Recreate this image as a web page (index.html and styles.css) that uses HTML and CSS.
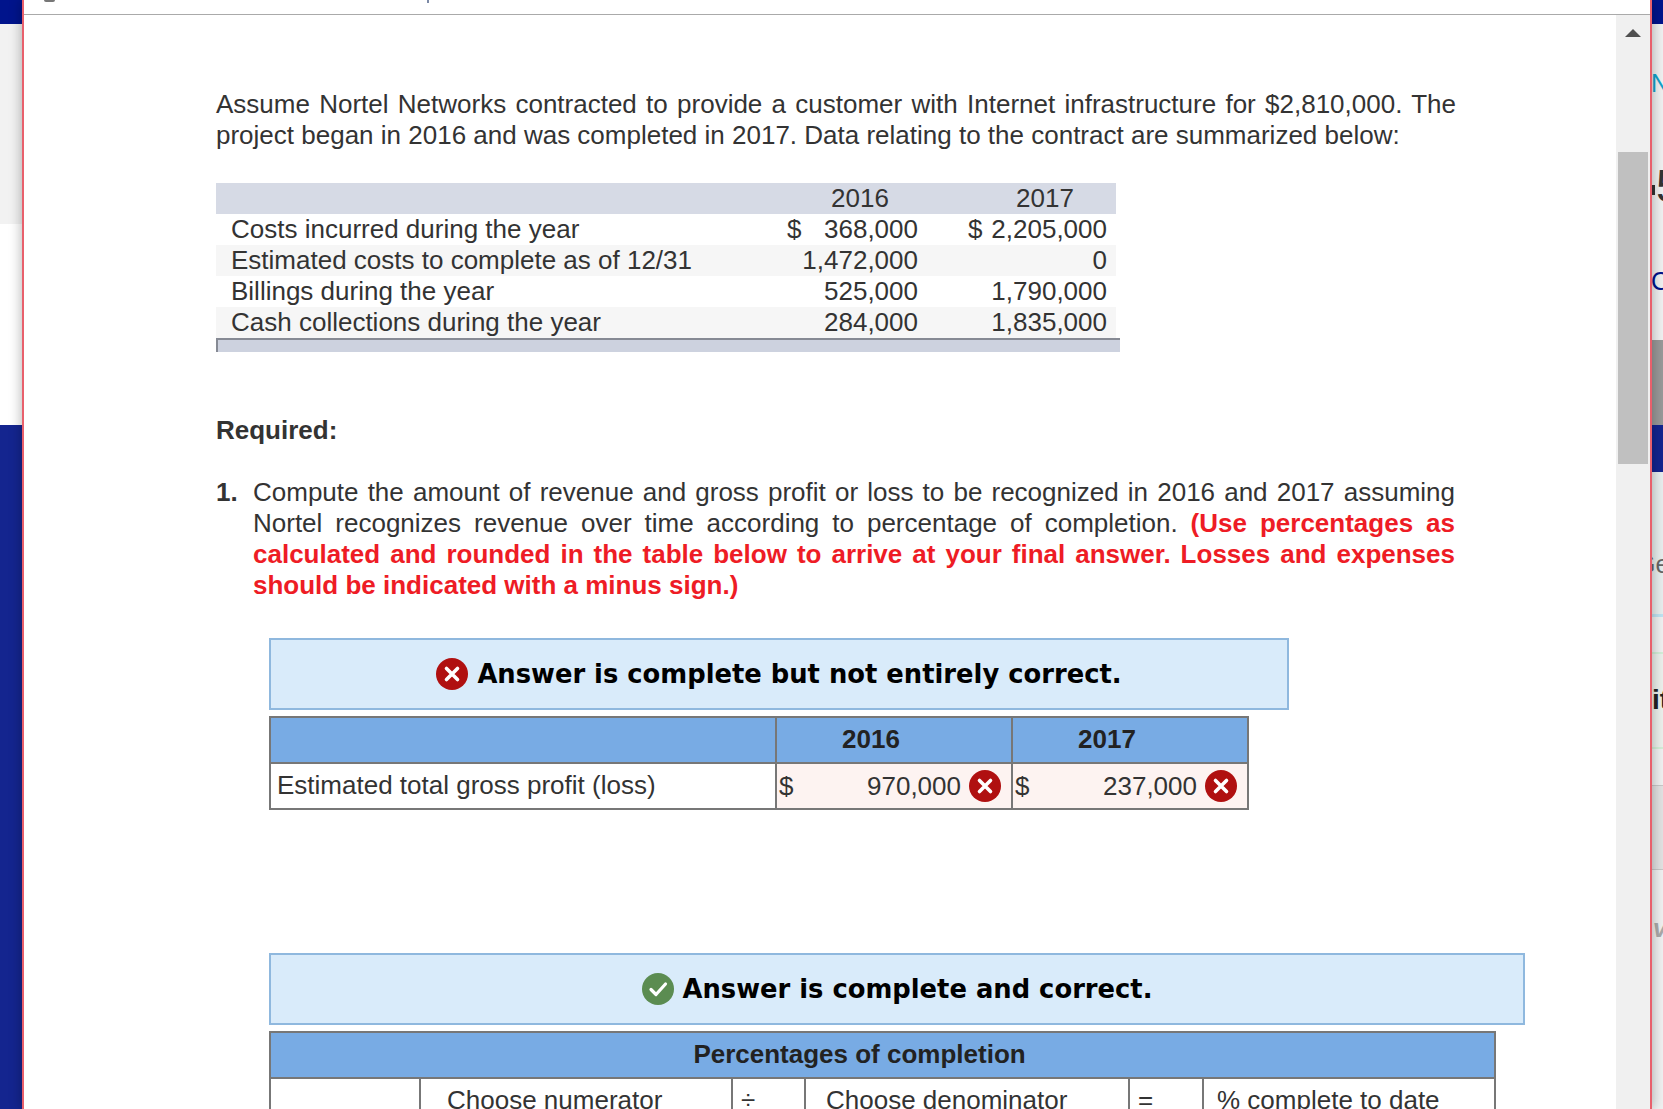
FILE: index.html
```html
<!DOCTYPE html>
<html lang="en">
<head>
<meta charset="utf-8">
<title>Nortel Networks percentage of completion</title>
<link rel="stylesheet" href="styles.css">
</head>
<body>
<svg class="defs" width="0" height="0" aria-hidden="true">
  <symbol id="icon-x" viewBox="0 0 32 32">
    <circle cx="16" cy="16" r="16" fill="#b01010"/>
    <path d="M10.5 10.5 21.5 21.5M21.5 10.5 10.5 21.5" stroke="#fff" stroke-width="3.6" stroke-linecap="round" fill="none"/>
  </symbol>
  <symbol id="icon-check" viewBox="0 0 32 32">
    <circle cx="16" cy="16" r="16" fill="#5b8c51"/>
    <path d="M9 16.5 14 21.5 23.5 11" stroke="#fff" stroke-width="3.2" stroke-linecap="round" stroke-linejoin="round" fill="none"/>
  </symbol>
</svg>
<div class="desktop">
  <aside class="strip-left">
    <div class="sl-blue"></div>
    <div class="sl-grey"></div>
    <div class="sl-white"></div>
    <div class="sl-navy"></div>
  </aside>

  <main class="modal">
    <div class="topbar">
      <span class="top-dot"></span>
      <span class="top-tick"></span>
    </div>
    <div class="modal-body">
      <div class="content">
        <p class="intro">Assume Nortel Networks contracted to provide a customer with Internet infrastructure for $2,810,000. The project began in 2016 and was completed in 2017. Data relating to the contract are summarized below:</p>

        <table class="data">
          <colgroup><col class="d-label"><col class="d-a"><col class="d-b"></colgroup>
          <thead>
            <tr><th></th><th class="h16">2016</th><th class="h17">2017</th></tr>
          </thead>
          <tbody>
            <tr><td class="lbl">Costs incurred during the year</td><td class="n16"><span class="cur">$</span>368,000</td><td class="n17"><span class="cur">$</span>2,205,000</td></tr>
            <tr class="alt"><td class="lbl">Estimated costs to complete as of 12/31</td><td class="n16">1,472,000</td><td class="n17">0</td></tr>
            <tr><td class="lbl">Billings during the year</td><td class="n16">525,000</td><td class="n17">1,790,000</td></tr>
            <tr class="alt"><td class="lbl">Cash collections during the year</td><td class="n16">284,000</td><td class="n17">1,835,000</td></tr>
          </tbody>
        </table>
        <div class="data-foot"></div>

        <p class="required">Required:</p>

        <div class="question">
          <b class="q-num">1.</b>
          <p class="q-text">Compute the amount of revenue and gross profit or loss to be recognized in 2016 and 2017 assuming Nortel recognizes revenue over time according to percentage of completion. <b class="warn">(Use percentages as calculated and rounded in the table below to arrive at your final answer. Losses and expenses should be indicated with a minus sign.)</b></p>
        </div>

        <div class="alert alert-a">
          <svg class="icon"><use href="#icon-x"/></svg>
          <span>Answer is complete but not entirely correct.</span>
        </div>
        <table class="answer answer-a">
          <colgroup><col class="a1"><col class="a2"><col class="a3"></colgroup>
          <thead><tr><th></th><th>2016</th><th>2017</th></tr></thead>
          <tbody>
            <tr>
              <td class="a-label">Estimated total gross profit (loss)</td>
              <td class="wrong"><div class="money"><span>$</span><span class="amount">970,000</span><svg class="icon"><use href="#icon-x"/></svg></div></td>
              <td class="wrong"><div class="money"><span>$</span><span class="amount">237,000</span><svg class="icon"><use href="#icon-x"/></svg></div></td>
            </tr>
          </tbody>
        </table>

        <div class="alert alert-b">
          <svg class="icon"><use href="#icon-check"/></svg>
          <span>Answer is complete and correct.</span>
        </div>
        <table class="answer answer-b">
          <colgroup><col class="b1"><col class="b2"><col class="b3"><col class="b4"><col class="b5"><col class="b6"></colgroup>
          <thead><tr><th colspan="6">Percentages of completion</th></tr></thead>
          <tbody>
            <tr>
              <td></td>
              <td class="pad-num">Choose numerator</td>
              <td class="pad-op">÷</td>
              <td class="pad-den">Choose denominator</td>
              <td class="pad-op">=</td>
              <td class="pad-res">% complete to date</td>
            </tr>
          </tbody>
        </table>
      </div>

      <div class="scrollbar">
        <div class="arrow"></div>
        <div class="thumb"></div>
      </div>
    </div>
  </main>

  <aside class="strip-right">
    <div class="sr-blue"></div>
    <div class="sr-n">N</div>
    <div class="sr-five"><span class="sr-tick"></span>5</div>
    <div class="sr-c">C</div>
    <div class="sr-grey"></div>
    <div class="sr-navy"></div>
    <div class="sr-ge">Ge</div>
    <div class="sr-it">it</div>
    <div class="sr-band"></div>
    <div class="sr-v">v</div>
  </aside>
</div>
</body>
</html>
```

FILE: styles.css
```css
* { box-sizing: border-box; }

html, body {
  margin: 0;
  padding: 0;
  height: 1109px;
  overflow: hidden;
  background: #fff;
}

.defs { position: absolute; }

.desktop {
  display: flex;
  width: 1663px;
  height: 1109px;
  font-family: "Liberation Sans", Arial, sans-serif;
  font-size: 26px;
  line-height: 31px;
  color: #333;
}

/* Page behind the modal */
.strip-left { width: 22px; flex: none; display: flex; flex-direction: column; }
.sl-blue { height: 24px; background: #00148c; }
.sl-grey { height: 200px; background: #f2f2f2; }
.sl-white { height: 201px; background: #fff; }
.sl-navy { flex: 1; background: #14258f; }

.strip-right { width: 11px; flex: none; overflow: hidden; background: #f0f1f1; display: flex; flex-direction: column; }
.sr-blue { height: 24px; background: #00148c; flex: none; }
.sr-n { height: 74px; padding-top: 44px; margin-left: -1px; font-size: 25px; line-height: 30px; color: #12a3cc; flex: none; }
.sr-five { height: 118px; padding-top: 58px; font-size: 46px; line-height: 60px; color: #333; flex: none; white-space: nowrap; }
.sr-tick { display: inline-block; width: 3px; height: 10px; margin-right: 1px; background: #333; vertical-align: middle; }
.sr-c { height: 124px; padding-top: 50px; margin-left: -1px; font-size: 25px; line-height: 30px; color: #00148c; flex: none; }
.sr-grey { height: 85px; background: #999; flex: none; }
.sr-navy { height: 47px; background: #14258f; flex: none; }
.sr-ge { height: 145px; padding-top: 77px; font-size: 25px; line-height: 30px; color: #666; text-indent: -16px; border-bottom: 3px solid #bfe3f2; flex: none; background: #e8eeee; }
.sr-it { height: 97px; padding-top: 31px; margin-top: 35px; font-weight: bold; font-size: 28px; line-height: 30px; color: #222; flex: none; border-top: 2px solid #d3efd8; border-bottom: 2px solid #d3efd8; background: #ecf0ec; }
.sr-band { height: 85px; margin-top: 36px; background: #e2e2e2; border-top: 1px solid #c8c8c8; border-bottom: 1px solid #c8c8c8; flex: none; }
.sr-v { padding-top: 43px; margin-left: 1px; font-style: italic; font-weight: bold; font-size: 25px; line-height: 30px; color: #aaa; flex: none; }

/* Modal */
.modal {
  position: relative;
  z-index: 1;
  flex: 1;
  min-width: 0;
  display: flex;
  flex-direction: column;
  background: #fff;
  border-left: 2px solid #e8606c;
  border-right: 2px solid #e8606c;
  box-shadow: 0 0 12px rgba(0, 0, 0, .32);
}

.topbar {
  height: 15px;
  flex: none;
  display: flex;
  align-items: flex-start;
  border-bottom: 1px solid #aaa;
}
.top-dot { width: 11px; height: 2px; margin-left: 20px; background: #777; border-radius: 0 0 6px 6px; }
.top-tick { width: 2px; height: 3px; margin-left: 372px; background: #7c8aa6; }

.modal-body { flex: 1; min-height: 0; display: flex; }

.content {
  flex: 1;
  min-width: 0;
  padding: 74px 0 0 192px;
  overflow: hidden;
}

.scrollbar { width: 34px; flex: none; background: #f0f0f0; display: flex; flex-direction: column; align-items: center; padding-top: 14px; }
.arrow { width: 0; height: 0; border-left: 8px solid transparent; border-right: 8px solid transparent; border-bottom: 8px solid #505050; }
.thumb { width: 30px; height: 312px; margin-top: 115px; background: #c0c0c0; }

/* Question */
.intro { width: 1240px; margin: 0; text-align: justify; }

.data { width: 900px; margin-top: 32px; border-collapse: collapse; table-layout: fixed; }
.d-label { width: 570px; }
.d-a { width: 140px; }
.d-b { width: 190px; }
.data th { height: 31px; padding: 0; font-weight: normal; background: #d6dae5; text-align: center; }
.data .h16 { padding-left: 8px; }
.data .h17 { padding-left: 48px; }
.data td { height: 31px; padding: 0; white-space: nowrap; }
.data .alt td { background: #f6f6f6; }
.data .lbl { padding-left: 15px; }
.n16 { text-align: right; padding-right: 8px !important; padding-left: 1px !important; }
.n17 { text-align: right; padding-right: 9px !important; padding-left: 42px !important; }
.cur { float: left; }

.data-foot { width: 904px; height: 14px; background: #cdd2df; border-top: 2px solid #868a94; border-left: 2px solid #868a94; }

.required { margin: 63px 0 0; font-weight: bold; }

.question { display: flex; width: 1239px; margin-top: 31px; }
.q-num { width: 37px; flex: none; }
.q-text { margin: 0; flex: 1; text-align: justify; }
.warn { color: #ee1c25; }

.alert {
  display: flex;
  align-items: center;
  justify-content: center;
  gap: 9px;
  height: 72px;
  margin-left: 53px;
  background: #d9ebfa;
  border: 2px solid #8fb8de;
  font-family: "DejaVu Sans", Verdana, sans-serif;
  font-weight: bold;
  font-size: 25.8px;
  color: #000;
}
.alert-a { width: 1020px; margin-top: 37px; }
.alert-b { width: 1256px; margin-top: 143px; }

.icon { width: 32px; height: 32px; flex: none; display: block; }

.answer {
  margin-left: 53px;
  margin-top: 6px;
  border-collapse: collapse;
  table-layout: fixed;
}
.answer th, .answer td { border: 2px solid #777; padding: 0 0 2px; height: 46px; }
.answer th { background: #78abe4; font-weight: bold; color: #222; text-align: center; padding-right: 46px; }
.answer-a { width: 978px; }
.answer-b { width: 1225px; }
.a1 { width: 506px; }
.a2 { width: 236px; }
.a3 { width: 236px; }
.b1 { width: 150px; }
.b2 { width: 312px; }
.b3 { width: 73px; }
.b4 { width: 324px; }
.b5 { width: 74px; }
.b6 { width: 292px; }

.a-label { padding-left: 6px !important; }
.wrong { background: #fdf3f1; padding-bottom: 0 !important; }
.money { display: flex; align-items: center; padding: 0 10px 0 2px; line-height: 29px; }
.amount { margin-left: auto; margin-right: 8px; }
.pad-num { padding-left: 26px !important; }
.pad-den { padding-left: 20px !important; }
.pad-op { padding-left: 8px !important; }
.pad-res { padding-left: 13px !important; }
```
